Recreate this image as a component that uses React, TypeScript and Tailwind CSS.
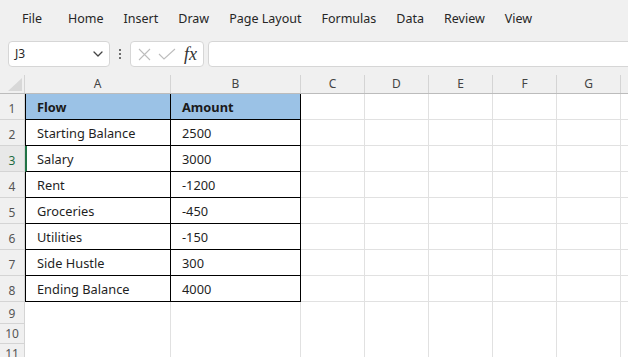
import React from "react";

const menu = ["Home", "Insert", "Draw", "Page Layout", "Formulas", "Data", "Review", "View"];

const data: [string, string][] = [
  ["Starting Balance", "2500"],
  ["Salary", "3000"],
  ["Rent", "-1200"],
  ["Groceries", "-450"],
  ["Utilities", "-150"],
  ["Side Hustle", "300"],
  ["Ending Balance", "4000"],
];

const cols = ["C", "D", "E", "F", "G", "H"];

function EmptyCells() {
  return (
    <>
      {cols.map((c) => (
        <div key={c} className="border-r border-b border-[#e1e1e1] bg-white" />
      ))}
    </>
  );
}

export default function App() {
  const font = { fontFamily: '"Noto Sans", "Open Sans", sans-serif' };
  return (
    <div className="w-[628px] h-[357px] overflow-hidden bg-[#f0f0f0] text-[#1f1f1f]" style={font}>
      {/* Menu */}
      <div className="h-[41px] flex items-center pl-[22px] pb-[3px] gap-[20px] text-[12.5px] text-[#262626]">
        <span className="mr-[6px]">File</span>
        {menu.map((m) => (
          <span key={m}>{m}</span>
        ))}
      </div>

      {/* Formula bar */}
      <div className="h-[26px] flex items-stretch pl-[8px]">
        <div className="shrink-0 w-[102px] h-[26px] bg-white border border-[#d6d6d6] rounded-[4px] flex items-center justify-between pl-[6px] pr-[6px]">
          <span className="text-[12px] text-[#262626]">J3</span>
          <svg width="10" height="6" viewBox="0 0 10 6" fill="none">
            <path d="M1 1 L5 5 L9 1" stroke="#444" strokeWidth="1.3" strokeLinecap="round" strokeLinejoin="round" />
          </svg>
        </div>
        <div className="shrink-0 w-[20px] flex flex-col items-center justify-center gap-[2px]">
          <span className="w-[2px] h-[2px] bg-[#444] rounded-full" />
          <span className="w-[2px] h-[2px] bg-[#444] rounded-full" />
          <span className="w-[2px] h-[2px] bg-[#444] rounded-full" />
        </div>
        <div className="shrink-0 w-[74px] h-[26px] bg-white border border-[#d6d6d6] rounded-[4px] flex items-center pl-[7px]">
          <svg width="13" height="13" viewBox="0 0 13 13" fill="none">
            <path d="M1 1 L12 12 M12 1 L1 12" stroke="#bdbdbd" strokeWidth="1.1" />
          </svg>
          <svg width="18" height="12" viewBox="0 0 18 12" fill="none" className="ml-[7px]">
            <path d="M1 6 L6 11 L17 1" stroke="#bdbdbd" strokeWidth="1.1" />
          </svg>
          <span
            className="ml-[8px] text-[18px] italic text-[#333] leading-none"
            style={{ fontFamily: '"Liberation Serif", "DejaVu Serif", serif' }}
          >
            fx
          </span>
        </div>
        <div className="shrink-0 ml-[4px] w-[440px] h-[26px] bg-white border border-[#d6d6d6] rounded-l-[4px]" />
      </div>

      <div className="h-[8px]" />

      {/* Grid */}
      <div className="text-[12.8px]">
        {/* Column header */}
        <div className="grid grid-cols-[25px_146px_130px_64px_64px_64px_64px_64px_64px] h-[19px] border-b border-[#bcbcbc] text-[#444] text-[12px]">
          <div className="relative border-r border-[#d4d4d4]">
            <div className="absolute right-[2px] bottom-[2px] w-0 h-0 border-l-[14px] border-l-transparent border-b-[13px] border-b-[#d8d8d8]" />
          </div>
          <div className="flex items-center justify-center border-r border-[#d4d4d4] leading-none">A</div>
          <div className="flex items-center justify-center border-r border-[#d4d4d4] leading-none">B</div>
          {cols.map((c) => (
            <div key={c} className="flex items-center justify-center border-r border-[#d4d4d4] leading-none">
              {c}
            </div>
          ))}
        </div>

        {/* Row 1 */}
        <div className="grid grid-cols-[25px_146px_130px_64px_64px_64px_64px_64px_64px] h-[26px]">
          <div className="flex items-center justify-center pt-[5px] border-r border-b border-[#d4d4d4] text-[#555] text-[12px]">1</div>
          <div className="flex items-center pl-[11px] pt-[2px] bg-[#9bc2e6] border-l border-r border-b border-black font-bold text-[#1a1a1a]">
            Flow
          </div>
          <div className="flex items-center pl-[11px] pt-[2px] bg-[#9bc2e6] border-r border-b border-black font-bold text-[#1a1a1a]">
            Amount
          </div>
          <EmptyCells />
        </div>

        {data.map(([a, b], i) => {
          const active = i === 1;
          return (
            <div key={a} className="grid grid-cols-[25px_146px_130px_64px_64px_64px_64px_64px_64px] h-[26px]">
              <div
                className={
                  active
                    ? "flex items-center justify-center pt-[5px] border-r border-b border-[#d4d4d4] bg-[#e8e8e8] text-[#1e6b3f] text-[12px]"
                    : "flex items-center justify-center pt-[5px] border-r border-b border-[#d4d4d4] text-[#555] text-[12px]"
                }
              >
                {i + 2}
              </div>
              <div
                className={
                  active
                    ? "flex items-center pl-[10px] pt-[2px] bg-white border-l-2 border-l-[#217346] border-r border-b border-r-black border-b-black"
                    : "flex items-center pl-[11px] pt-[2px] bg-white border-l border-r border-b border-black"
                }
              >
                {a}
              </div>
              <div className="flex items-center pl-[11px] pt-[2px] bg-white border-r border-b border-black">{b}</div>
              <EmptyCells />
            </div>
          );
        })}

        {[9, 10, 11].map((n) => (
          <div key={n} className="grid grid-cols-[25px_146px_130px_64px_64px_64px_64px_64px_64px] h-[20px]">
            <div className="flex items-center justify-center pt-[3px] border-r border-b border-[#d4d4d4] text-[#555] text-[12px]">{n}</div>
            <div className="bg-white border-l border-l-white border-r border-b border-[#e1e1e1]" />
            <div className="bg-white border-r border-b border-[#e1e1e1]" />
            <EmptyCells />
          </div>
        ))}
      </div>
    </div>
  );
}
